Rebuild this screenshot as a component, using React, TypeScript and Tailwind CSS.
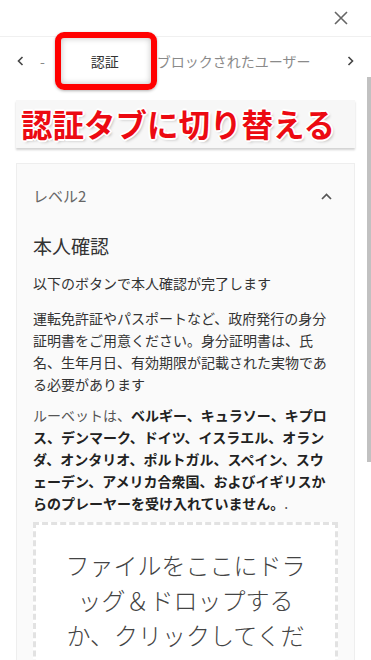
import React from "react";

export default function App() {
  const font = "font-['Noto_Sans_CJK_JP','Noto_Sans',sans-serif]";
  return (
    <div className={`relative w-[371px] h-[660px] overflow-hidden bg-white ${font}`}>
      {/* header */}
      <div className="h-[37px] border-b border-[#f0f0f0] flex justify-end items-center pr-[23px]">
        <svg width="14" height="14" viewBox="0 0 14 14" fill="none" stroke="#666" strokeWidth="1.6">
          <path d="M1 1L13 13M13 1L1 13" />
        </svg>
      </div>
      {/* tabs */}
      <div className="relative h-[48px] flex items-center text-[14px]">
        <svg className="ml-[17px]" width="7" height="10" viewBox="0 0 7 10" fill="none" stroke="#444" strokeWidth="1.6">
          <path d="M5.5 1L1.5 5L5.5 9" />
        </svg>
        <span className="ml-[16px] text-[#888]">-</span>
        <div className="w-[100px] flex justify-center ml-[10px] text-[#333]">認証</div>
        <span className="ml-[2px] text-[#8a8a8a] whitespace-nowrap">ブロックされたユーザー</span>
        <svg className="ml-auto mr-[17px]" width="7" height="10" viewBox="0 0 7 10" fill="none" stroke="#444" strokeWidth="1.6">
          <path d="M1.5 1L5.5 5L1.5 9" />
        </svg>
        <div className="absolute left-[55px] top-[-5px] w-[102px] h-[58px] border-[6px] border-[#ff0000] rounded-[9px] shadow-[inset_0_0_6px_rgba(0,0,0,0.25),0_1px_3px_rgba(0,0,0,0.3)]" />
      </div>
      {/* annotation banner */}
      <div className="mx-4 mt-[15px] h-[48px] bg-[#f7f7f7] shadow-[0_2px_2px_rgba(0,0,0,0.18)] flex items-center pl-[5px]">
        <span className="text-[31.5px] leading-none font-bold text-[#ec0a12] whitespace-nowrap [text-shadow:0_0_2px_#fff,1px_1px_0_#fff,-1px_-1px_0_#fff,1px_-1px_0_#fff,-1px_1px_0_#fff,2px_0_0_#fff,-2px_0_0_#fff,0_2px_0_#fff,0_-2px_0_#fff,2px_2px_3px_rgba(0,0,0,0.25)]">
          認証タブに切り替える
        </span>
      </div>
      {/* card */}
      <div className="mx-4 mt-[15px] bg-[#fafafa] border border-[#eeeeee] px-4 pt-[20px] pb-10">
        <div className="flex items-center justify-between h-[24px]">
          <span className="text-[15px] text-[#666]">レベル2</span>
          <svg className="mr-[6px]" width="11" height="7" viewBox="0 0 11 7" fill="none" stroke="#555" strokeWidth="1.7">
            <path d="M1 6L5.5 1.5L10 6" />
          </svg>
        </div>
        <div className="mt-[26px] text-[19px] leading-[24px] text-[#333]">本人確認</div>
        <div className="mt-[14px] text-[14px] leading-[22px] text-[#333]">以下のボタンで本人確認が完了します</div>
        <div className="mt-[13px] text-[14px] leading-[22px] text-[#333] whitespace-nowrap">
          <div>運転免許証やパスポートなど、政府発行の身分</div>
          <div>証明書をご用意ください。身分証明書は、氏</div>
          <div>名、生年月日、有効期限が記載された実物であ</div>
          <div>る必要があります</div>
        </div>
        <div className="mt-[9px] text-[14px] leading-[22px] text-[#222] whitespace-nowrap">
          <div><span className="text-[#555]">ルーベットは、</span><b>ベルギー、キュラソー、キプロ</b></div>
          <div><b>ス、デンマーク、ドイツ、イスラエル、オラン</b></div>
          <div><b>ダ、オンタリオ、ポルトガル、スペイン、スウ</b></div>
          <div><b>ェーデン、アメリカ合衆国、およびイギリスか</b></div>
          <div><b>らのプレーヤーを受け入れていません。</b><span className="text-[#555]">.</span></div>
        </div>
        <div className="mt-[8px] border-[3px] border-dashed border-[#e2e2e2] bg-white pt-[22px] pb-10 text-center text-[24px] leading-[35px] font-light text-[#444]">
          <div>ファイルをここにドラ</div>
          <div>ッグ＆ドロップする</div>
          <div>か、クリックしてくだ</div>
          <div>さい</div>
        </div>
      </div>
      {/* scrollbar */}
      <div className="absolute left-[367px] top-[77px] w-[4px] h-[385px] bg-[#c1c1c1]" />
    </div>
  );
}
